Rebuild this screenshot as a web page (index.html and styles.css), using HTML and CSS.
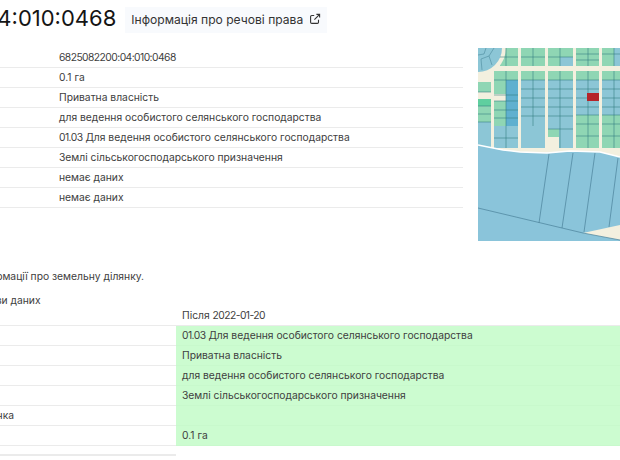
FILE: index.html
```html
<!DOCTYPE html>
<html lang="uk">
<head>
<meta charset="utf-8">
<title>Ділянка</title>
<link rel="stylesheet" href="styles.css">
</head>
<body>
<div class="page">
  <header class="head">
    <h1 class="title">6825082200:04:010:0468</h1>
    <a class="rights" href="#"><span class="rights-text">Інформація про речові права</span>
      <svg class="ext" viewBox="0 0 12 12" width="12" height="12" fill="none" stroke="#333" stroke-width="1.1"><path d="M9.5 6.8v2.4a1.2 1.2 0 0 1-1.2 1.2H2.8a1.2 1.2 0 0 1-1.2-1.2V3.7a1.2 1.2 0 0 1 1.2-1.2h2.4"/><path d="M7.4 1.4h3.2v3.2M10.6 1.4 5.4 6.6"/></svg>
    </a>
  </header>
  <section class="summary">
    <div class="info">
      <div class="row"><span class="num">6825082200:04:010:0468</span></div>
      <div class="row"><span>0.1 га</span></div>
      <div class="row"><span>Приватна власність</span></div>
      <div class="row"><span>для ведення особистого селянського господарства</span></div>
      <div class="row"><span><span class="num">01.03</span> Для ведення особистого селянського господарства</span></div>
      <div class="row"><span>Землі сільськогосподарського призначення</span></div>
      <div class="row"><span>немає даних</span></div>
      <div class="row"><span>немає даних</span></div>
    </div>
    <svg class="map" viewBox="0 0 142 193" width="142" height="193">
      <rect width="142" height="193" fill="#f3f0df"/>
      <g fill="#8fd6b4">
        <rect x="22" y="0" width="18" height="18"/><rect x="43" y="0" width="24" height="18"/><rect x="70" y="0" width="25" height="18"/><rect x="98" y="0" width="23" height="18"/><rect x="124" y="0" width="18" height="18"/>
        <rect x="16" y="23" width="24" height="9"/><rect x="43" y="23" width="24" height="9"/><rect x="70" y="23" width="25" height="9"/><rect x="98" y="23" width="23" height="9"/><rect x="124" y="23" width="18" height="9"/>
        <rect x="16" y="32" width="12" height="15"/><rect x="16" y="53" width="12" height="25"/>
        <rect x="0" y="34" width="13" height="40"/>
        <rect x="98" y="67" width="23" height="33"/><rect x="124" y="67" width="18" height="33"/>
        <rect x="70" y="81" width="11" height="8"/>
      </g>
      <rect x="0" y="50" width="13" height="8" fill="#5fcf9f"/>
      <g fill="#8cc6d6">
        <rect x="0" y="74" width="13" height="26"/>
        <rect x="16" y="78" width="24" height="22"/>
        <rect x="43" y="32" width="24" height="68"/>
        <rect x="70" y="32" width="25" height="49"/><rect x="81" y="81" width="14" height="19"/>
        <rect x="98" y="32" width="23" height="35"/>
        <rect x="124" y="32" width="18" height="35"/>
        <rect x="82" y="9" width="13" height="9"/>
        <rect x="136" y="0" width="6" height="18"/>
      </g>
      <rect x="28" y="32" width="12" height="46" fill="#5fb0cf"/>
      <path d="M0 0H28A28 28 0 0 1 0 28Z" fill="#f3f0df"/>
      <path d="M0 0H24A24 24 0 0 1 0 24Z" fill="#8cc6d6"/>
      <path d="M16 0 11 8 3 11M11 8 14 17M3 11 4 22M8 0 6 6 0 7" stroke="#4d8b9e" stroke-width=".6" fill="none"/>
      <rect x="0" y="44" width="16" height="7" fill="#f3f0df"/>
      <rect x="16" y="46" width="12" height="7" fill="#f3f0df"/>
      <rect x="70" y="89" width="10" height="3" fill="#f3f0df"/>
      <path d="M22 9H40M28 0V18M43 9H67M55 0V18M70 9H95M82 0V18M98 6H121M98 12H121M110 0V18M124 6H142M136 0V18M16 32H40M16 47H40M16 53H40M16 62H40M16 70H40M28 23V100M16 90H40M43 32H67M43 41H67M43 50H67M43 59H67M43 68H67M55 23V78M70 32H95M70 41H95M70 50H95M70 59H95M70 68H95M70 81H95M82 23V100M98 32H121M98 41H121M98 50H121M98 59H121M98 67H121M98 76H121M98 88H121M110 23V100M124 32H142M124 41H142M124 50H142M124 59H142M124 67H142M124 76H142M124 88H142M136 23V100M0 44H13M0 58H13M0 66H13M0 74H13" stroke="#2f7a80" stroke-width=".7" stroke-opacity=".8" fill="none"/>
      <rect x="109" y="45" width="12" height="8" fill="#b5242a"/>
      <path d="M0 97 25 102 42 104 69 105 92 103 122 104 142 109V193H0Z" fill="#8ac4da"/>
      <path d="M0 97 25 102 42 104 69 105 92 103 122 104 142 109" fill="none" stroke="#fff" stroke-width="1.5"/>
      <path d="M105 185 142 177V192Z" fill="#f3f0df"/>
      <path d="M71 106 61 175M95 105 84 180M117 105 106 184M140 110 131 179M0 160 105 185 142 192" stroke="#4a8199" stroke-width=".7" fill="none"/>
    </svg>
  </section>
  <p class="lead">Інформації про земельну ділянку.</p>
  <p class="sub">Бази даних</p>
  <div class="compare">
    <div class="crow head-row"><span class="cl"></span><span class="cv"><span>Після <span class="num">2022-01-20</span></span></span></div>
    <div class="crow"><span class="cl"></span><span class="cv new"><span><span class="num">01.03</span> Для ведення особистого селянського господарства</span></span></div>
    <div class="crow"><span class="cl"></span><span class="cv new">Приватна власність</span></div>
    <div class="crow"><span class="cl"></span><span class="cv new">для ведення особистого селянського господарства</span></div>
    <div class="crow"><span class="cl"></span><span class="cv new">Землі сільськогосподарського призначення</span></div>
    <div class="crow"><span class="cl">Ділянка</span><span class="cv new"></span></div>
    <div class="crow"><span class="cl"></span><span class="cv new">0.1 га</span></div>
    <div class="crow short"><span class="cl"></span></div>
  </div>
</div>
</body>
</html>
```
FILE: styles.css
```css
html, body {
  margin: 0;
  padding: 0;
  width: 620px;
  height: 460px;
  overflow: hidden;
  background: #fff;
}
body {
  font-family: Inter, "Liberation Sans", sans-serif;
  font-size: 10.3px;
  color: #404040;
}
.page {
  margin-left: -26px;
  width: 646px;
}
.head {
  display: flex;
  align-items: center;
  height: 40px;
  margin-left: -133px;
}
.title {
  flex: none;
  margin: 0 0 4px;
  font-size: 22px;
  font-weight: 400;
  color: #151515;
  white-space: nowrap;
}
.rights {
  display: flex;
  align-items: center;
  flex: none;
  gap: 6px;
  margin-left: 9px;
  width: 202px;
  height: 26px;
  box-sizing: border-box;
  padding: 0 0 2px 6px;
  background: #f8fafd;
  color: #333;
  font-size: 12.1px;
  font-weight: 400;
  text-decoration: none;
  white-space: nowrap;
}
.summary {
  display: flex;
  align-items: flex-start;
  margin-top: 7px;
}
.info {
  width: 489px;
  flex: none;
  padding-top: 1px;
}
.row {
  height: 20px;
  box-sizing: border-box;
  border-bottom: 1px solid #ebebeb;
  display: flex;
  align-items: center;
  padding: 0 0 2px 85px;
}
.num {
  letter-spacing: -0.55px;
}
.map {
  display: block;
  flex: none;
  margin-left: 15px;
  margin-top: 1px;
}
.lead {
  margin: 28px 0 0;
  line-height: 14px;
}
.sub {
  margin: 10px 0 0;
  padding-left: 10px;
  line-height: 14px;
}
.compare {
  margin-top: -1px;
}
.crow {
  display: flex;
  height: 20px;
}
.cl {
  width: 202px;
  flex: none;
  box-sizing: border-box;
  border-bottom: 1px solid #ebebeb;
  display: flex;
  align-items: center;
  padding-bottom: 2px;
}
.cv {
  flex: 1;
  padding: 0 0 2px 6px;
  display: flex;
  align-items: center;
  border-bottom: 1px solid #ebebeb;
}
.cv.new {
  background: #ccfcd0;
  border-bottom-color: #c8f9cc;
}
.crow.short {
  height: 10px;
}
.crow.short .cl {
  border-bottom-width: 2px;
}
```
